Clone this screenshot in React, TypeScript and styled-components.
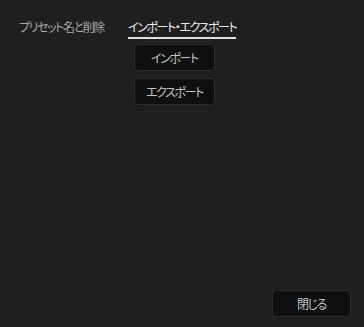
import React, { useState } from "react";
import styled, { createGlobalStyle } from "styled-components";

const GlobalStyle = createGlobalStyle`
  html, body {
    margin: 0;
    padding: 0;
    background: #1f1f1f;
  }
  body {
    font-family: "Noto Sans CJK JP", "Noto Sans", sans-serif;
    font-feature-settings: "palt";
  }
  #root {
    height: 100vh;
  }
`;

const Page = styled.div`
  height: 100%;
  box-sizing: border-box;
  display: flex;
  flex-direction: column;
  padding: 17px 13px 10px 19px;
`;

const Tabs = styled.div`
  display: flex;
  gap: 24px;
  height: 22px;
`;

const Tab = styled.button<{ $active?: boolean }>`
  background: none;
  border: none;
  padding: 0;
  height: 22px;
  font-family: inherit;
  font-feature-settings: "palt";
  font-size: 12px;
  letter-spacing: -1.4px;
  line-height: 20px;
  color: ${(p) => (p.$active ? "#ececec" : "#a8a8a8")};
  border-bottom: 2px solid ${(p) => (p.$active ? "#e0e0e0" : "transparent")};
  cursor: pointer;
`;

const Content = styled.div`
  flex: 1;
  display: flex;
  flex-direction: column;
  gap: 7px;
  padding: 5px 0 0 115px;
`;

const Button = styled.button<{ $width?: number }>`
  width: ${(p) => p.$width || 81}px;
  height: 27px;
  box-sizing: border-box;
  background: #0f0f0f;
  border: 1px solid #2c2c2c;
  border-radius: 4px;
  color: #c4c4c4;
  font-family: inherit;
  font-feature-settings: "palt";
  font-size: 12px;
  letter-spacing: -1.4px;
  padding: 0;
  cursor: pointer;
`;

const Footer = styled.div`
  display: flex;
  justify-content: flex-end;
`;

const App = () => {
  const [tab, setTab] = useState(1);
  return (
    <>
      <GlobalStyle />
      <Page>
        <Tabs>
          <Tab $active={tab === 0} onClick={() => setTab(0)}>
            プリセット名と削除
          </Tab>
          <Tab $active={tab === 1} onClick={() => setTab(1)}>
            インポート・エクスポート
          </Tab>
        </Tabs>
        <Content>
          {tab === 1 && (
            <>
              <Button>インポート</Button>
              <Button>エクスポート</Button>
            </>
          )}
        </Content>
        <Footer>
          <Button $width={79}>閉じる</Button>
        </Footer>
      </Page>
    </>
  );
};

export default App;
